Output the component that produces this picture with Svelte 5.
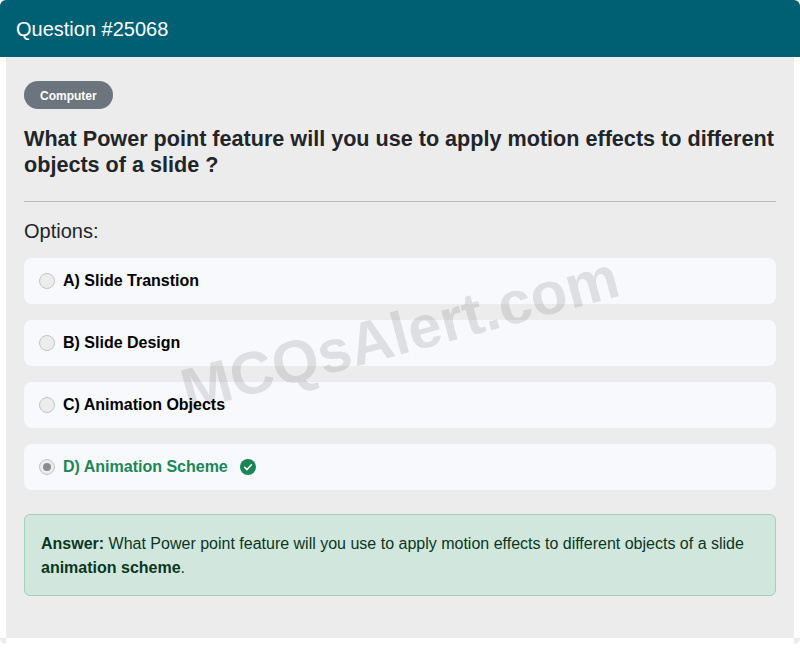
<script>
  const options = [
    { label: "A) Slide Transtion", correct: false },
    { label: "B) Slide Design", correct: false },
    { label: "C) Animation Objects", correct: false },
    { label: "D) Animation Scheme", correct: true }
  ];
</script>

<div class="card">
  <header class="head">Question #25068</header>
  <div class="edge"></div>
  <main class="body">
    <span class="badge">Computer</span>
    <h1>What Power point feature will you use to apply motion effects to different objects of a slide ?</h1>
    <hr />
    <h2>Options:</h2>
    <ul class="options">
      {#each options as opt}
        <li class="option" class:correct={opt.correct}>
          <span class="radio" class:checked={opt.correct}></span>
          <span class="label">{opt.label}</span>
          {#if opt.correct}
            <svg class="tick" viewBox="0 0 16 16" width="16" height="16">
              <circle cx="8" cy="8" r="8" fill="#198754" />
              <path d="M4.6 8.3 L7 10.6 L11.4 5.8" fill="none" stroke="#fff" stroke-width="1.5" stroke-linecap="round" stroke-linejoin="round" />
            </svg>
          {/if}
        </li>
      {/each}
    </ul>
    <div class="answer">
      <b>Answer:</b> What Power point feature will you use to apply motion effects to different objects of a slide <b>animation scheme</b>.
    </div>
    <div class="watermark">MCQsAlert.com</div>
  </main>
  <div class="edge"></div>
  <div></div>
  <div class="edge"></div>
  <div></div>
</div>

<style>
  :global(body) {
    background: #fff;
    font-family: "Liberation Sans", Arial, sans-serif;
  }

  * {
    box-sizing: border-box;
  }

  .card {
    display: grid;
    grid-template-columns: 6px 1fr 6px;
    grid-template-rows: 57px 581px 6px;
    width: 800px;
    background: #ececec;
    border-radius: 6px;
    overflow: hidden;
  }

  .head {
    grid-column: 1 / 4;
    display: flex;
    align-items: center;
    padding: 2px 0 0 16px;
    background: #006073;
    color: #fff;
    font-size: 20px;
  }

  .edge {
    background: #fff;
  }

  .body {
    position: relative;
    padding: 24px 18px 0;
    background: #ececec;
  }

  .badge {
    display: inline-block;
    height: 28px;
    padding: 0 16px;
    border-radius: 14px;
    background: #6c757d;
    color: #fff;
    font-size: 12px;
    font-weight: 700;
    line-height: 30px;
    vertical-align: top;
  }

  h1 {
    margin: 17px 0 0;
    color: #212529;
    font-size: 21.6px;
    font-weight: 700;
    line-height: 26.4px;
  }

  hr {
    margin: 22px 0 0;
    border: 0;
    border-top: 1px solid #bcbcbc;
  }

  h2 {
    margin: 17px 0 0;
    color: #212529;
    font-size: 20px;
    font-weight: 400;
    line-height: 24px;
  }

  .options {
    display: flex;
    flex-direction: column;
    gap: 16px;
    margin: 15px 0 0;
    padding: 0;
    list-style: none;
  }

  .option {
    display: flex;
    align-items: center;
    height: 46px;
    padding-left: 15px;
    border-radius: 8px;
    background: #f8f9fd;
    color: #000;
    font-size: 16px;
    font-weight: 700;
  }

  .option.correct {
    color: #198754;
  }

  .label {
    padding-top: 1px;
  }

  .radio {
    display: flex;
    align-items: center;
    justify-content: center;
    width: 16px;
    height: 16px;
    margin-right: 8px;
    border: 1px solid #c4c4c4;
    border-radius: 50%;
    background: #ececec;
  }

  .radio.checked::after {
    content: "";
    width: 8px;
    height: 8px;
    border-radius: 50%;
    background: #8c8c8c;
  }

  .tick {
    margin-left: 12px;
  }

  .answer {
    margin-top: 24px;
    padding: 17px 16px 15px;
    border: 1px solid #a3cfbb;
    border-radius: 6px;
    background: #d1e7dd;
    color: #0a3622;
    font-size: 16px;
    line-height: 24px;
  }

  .watermark {
    position: absolute;
    left: 0;
    right: 0;
    top: 242px;
    color: rgba(0, 0, 0, 0.1);
    font-size: 60px;
    font-weight: 700;
    line-height: 70px;
    text-align: center;
    white-space: nowrap;
    transform: rotate(-15deg);
    pointer-events: none;
  }
</style>
